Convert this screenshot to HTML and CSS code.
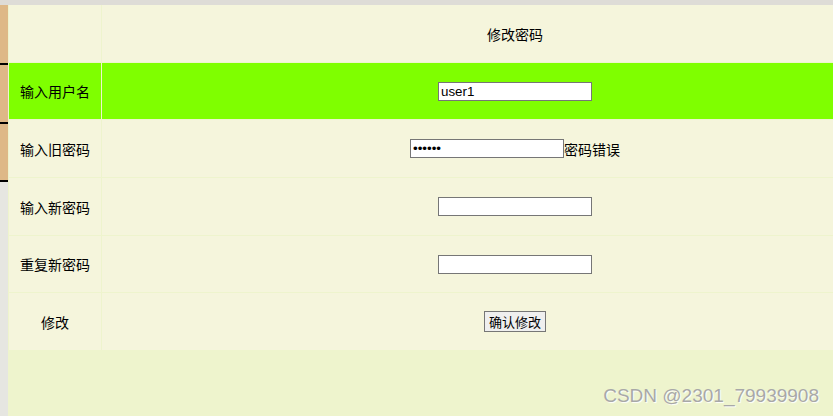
FILE: index.html
```html
<!DOCTYPE html>
<html lang="zh">
<head>
<meta charset="utf-8">
<title>修改密码</title>
<link rel="stylesheet" href="styles.css">
</head>
<body>
<div class="topbar"></div>
<div class="frames">
  <div class="sidebar">
    <div class="menu-item"></div>
    <div class="menu-item"></div>
    <div class="menu-item"></div>
  </div>
  <div class="main">
    <div class="form-table">
      <div class="cell label"></div>
      <div class="cell field title">修改密码</div>

      <div class="cell label hl">输入用户名</div>
      <div class="cell field hl"><input class="txt" type="text" value="user1"></div>

      <div class="cell label">输入旧密码</div>
      <div class="cell field"><input class="txt" type="password" value="123456"><span class="err">密码错误</span></div>

      <div class="cell label">输入新密码</div>
      <div class="cell field"><input class="txt" type="password"></div>

      <div class="cell label">重复新密码</div>
      <div class="cell field"><input class="txt" type="password"></div>

      <div class="cell label">修改</div>
      <div class="cell field"><button class="btn" type="button">确认修改</button></div>
    </div>
    <div class="watermark">CSDN @2301_79939908</div>
  </div>
</div>
</body>
</html>
```
FILE: styles.css
```css
html, body {
  margin: 0;
  padding: 0;
  height: 100%;
  overflow: hidden;
}
body {
  font-family: "Noto Sans CJK SC", "Liberation Sans", sans-serif;
  font-size: 14px;
  color: #000;
  background: #e6e6e1;
  display: flex;
  flex-direction: column;
}
.topbar {
  height: 5px;
  background: #dedcd7;
  flex: none;
}
.frames {
  flex: 1;
  display: flex;
  min-height: 0;
}
.sidebar {
  width: 8px;
  flex: none;
  background: #e6e6e1;
}
.menu-item {
  height: 57px;
  background: #deb887;
  border-bottom: 2px solid #000;
}
.menu-item:first-child {
  height: 58px;
}
.menu-item:last-child {
  height: 56px;
}
.main {
  flex: 1;
  position: relative;
  background: #eef4cd;
}
.form-table {
  display: grid;
  grid-template-columns: 92px 1fr;
  grid-template-rows: 57px 56px 57px 57px 56px 57px;
  gap: 1px;
  padding-left: 1px;
}
.cell {
  background: #f5f5dc;
  display: flex;
  align-items: center;
  justify-content: center;
  white-space: nowrap;
}
.cell.hl {
  background: #7fff00;
}
.field {
  padding-left: 95px;
}
.title {
  padding-top: 1px;
}
.txt {
  box-sizing: border-box;
  width: 154px;
  height: 19px;
  margin: 0;
  padding: 1px 2px;
  border: 1px solid #767676;
  background: #fff;
  font-family: "Liberation Sans", Arial, sans-serif;
  font-size: 13.33px;
  color: #000;
  outline: none;
}
.err {
  font-size: 14px;
}
.btn {
  box-sizing: border-box;
  height: 21px;
  margin: 0;
  padding: 0 4px;
  border: 1px solid #767676;
  border-radius: 0;
  background: #efefef;
  font-family: "Noto Sans CJK SC", sans-serif;
  font-size: 13px;
  color: #000;
  line-height: 19px;
}
.watermark {
  position: absolute;
  right: 14px;
  bottom: 9px;
  font-family: "Liberation Sans", Arial, sans-serif;
  font-size: 19px;
  color: #a8a8a8;
  text-shadow: 1px 1px 1px #fff;
}
```
